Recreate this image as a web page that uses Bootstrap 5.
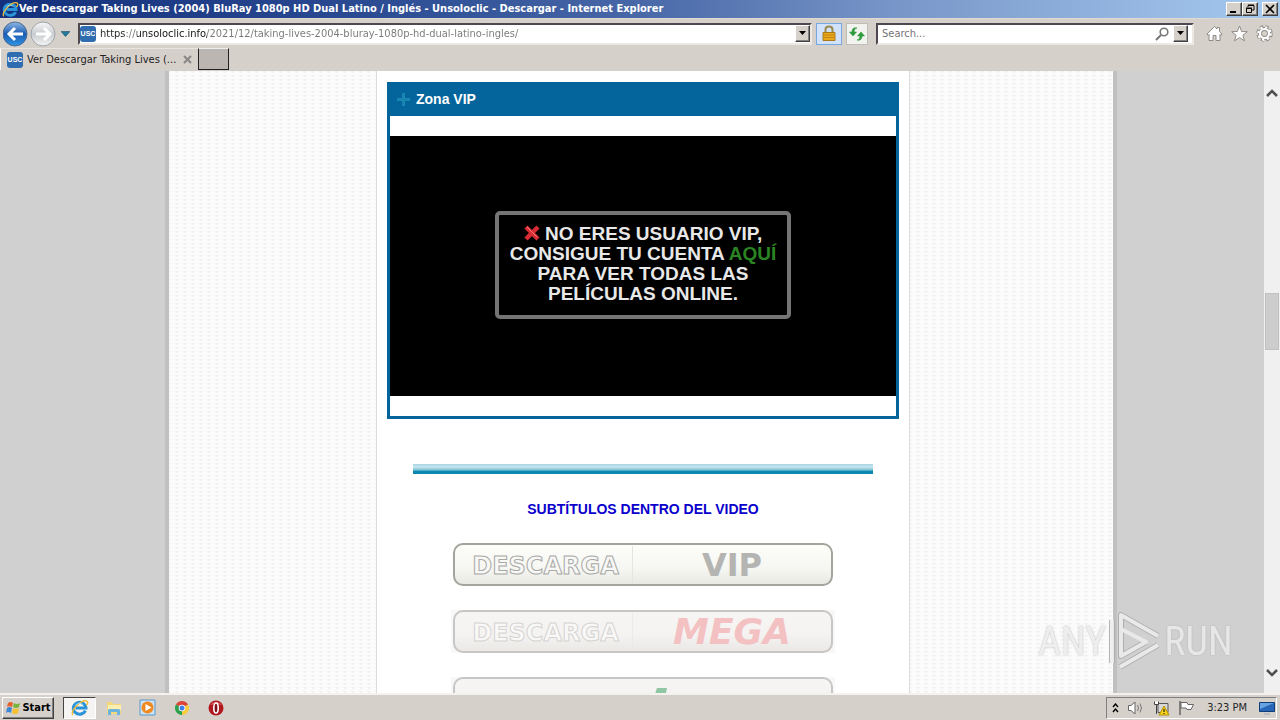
<!DOCTYPE html>
<html lang="es">
<head>
<meta charset="utf-8">
<meta name="viewport" content="width=device-width, initial-scale=1">
<title>Ver Descargar Taking Lives (2004)</title>
<link href="https://cdn.jsdelivr.net/npm/bootstrap@5.3.0/dist/css/bootstrap.min.css" rel="stylesheet">
<style>
:root{--face:#d6d0ca}
body{font-family:"Liberation Sans",Arial,sans-serif;background:#d0d0d0}
svg{display:block;flex:none}
button{padding:0;border:0;background:none}
.ui{font-family:"DejaVu Sans Condensed","DejaVu Sans",sans-serif;font-size:11px;line-height:16px}
.titlebar{height:18px;background:linear-gradient(90deg,#14307c,#2c4c94 30%,#4868a8 50%,#7896c8 70%,#a6caf0);padding:0 2px}
.raised{background:var(--face);border:1px solid;border-color:#fff #404040 #404040 #fff;box-shadow:inset -1px -1px #808080;color:#000;display:flex;align-items:center;justify-content:center}
.winbtn{width:16px;height:14px}
.toolbar-row{height:30px;background:var(--face);padding:4px 7px 4px 3px;border-top:1px solid #dedad0}
.field{height:22px;background:#fff;border:2px solid;border-color:#504850 #eee8e2 #eee8e2 #504850}
.field input{border:0;outline:0;background:transparent;min-width:0;padding:0;color:#777}
.field .url{-webkit-text-fill-color:transparent;background:linear-gradient(90deg,#222 0 26px,#777 0 37px,#111 0 107px,#777 0);-webkit-background-clip:text;background-clip:text}
.searchbox{width:318px;flex:none}
.drop{width:15px;height:17px}
.tool{width:22px;height:22px;display:flex;align-items:center;justify-content:center;border:1px solid #c0bcb8;background:#f2f2ee}
.tool.lock{width:26px;background:#d2e2fa;border-color:#78a8e0}
.usc{width:16px;height:16px;border-radius:3px;background:#2f6cb0;color:#fff;font:bold 7px/16px "Liberation Sans",sans-serif;text-align:center;flex:none}
.tabs-row{height:23px;background:var(--face)}
.tab-on{width:198px;height:22px;border-left:1px solid #fff;border-top:1px solid #e8e4e0;padding:0 6px;color:#222}
.newtab{width:31px;height:22px;border:1px solid;border-color:#eee #222 #222 #222;background:#bcb6b2}
.view{background:#d0d0d0;min-height:0}
.page-wrap{max-width:954px;padding-left:2px}
.page-box{border:solid #c0c0c0;border-width:0 4px;background:#fafafa}
.side-l{flex:207 1 0}
.side-r{flex:203 1 0}
.side-l,.side-r{background:linear-gradient(135deg,#f2f2f2 25%,transparent 0) 0 0/8px 4px,linear-gradient(225deg,#f2f2f2 25%,transparent 0) 0 0/8px 4px,#fbfbfb}
.post{flex:0 1 534px;background:#fff;border:solid #dcdcdc;border-width:0 1px;padding:11px 10px 0}
.zone{border:3px solid #04659c;border-top:0;padding-bottom:20px}
.zone h2{height:34px;margin:0 -3px 20px;background:#04659c;color:#fff;font-size:14px;font-weight:bold;line-height:34px;padding-left:10px;gap:6px}
.player{height:260px;background:#000;padding-bottom:2px}
.notice{width:296px;border:4px solid #747474;border-radius:5px;padding:9px 6px 11px;font-size:19px;line-height:20px;font-weight:bold;color:#e8e8e8}
.notice a{color:#2a8422;text-decoration:none}
.notice svg{display:inline-block;vertical-align:-1px}
.rule-bar{width:460px;height:10px;margin:45px 0 25px 26px;background:linear-gradient(#a8d4e4,#c8e6f0 30%,#78c0d4 60%,#0c88b0 75%)}
.subs{font-size:14px;line-height:20px;font-weight:bold;color:#0a00cc}
.dl{display:flex;align-items:center;width:380px;height:43px;border:2px solid #a4a49c;border-radius:10px;background:linear-gradient(#fdfdfa,#f6f6f2 60%,#e9e9e4);font-family:"DejaVu Sans",sans-serif;font-weight:bold;text-decoration:none;color:#b4b4b2;white-space:nowrap}
.dl .what{width:178px;height:38px;border-right:1px solid #e4e4e0;font-size:24px;line-height:40px;padding-left:4px;color:#f8f8f6;-webkit-text-stroke:1px #a8a8a6;text-align:center}
.dl .host{flex:1;text-align:center;font-size:32px;line-height:40px}
.dl.dim{border-color:#c8c6c4;background:linear-gradient(#f6f5f4,#f4f3f2 60%,#ebe8e5)}
.dl.dim .what{-webkit-text-stroke-color:#d6d3d2;border-color:#ece9e8}
.dl.dim .mega{font-size:36px;line-height:36px;font-style:italic;color:#f3c1c1}
.halo{background:#f8f8f8;padding:0 2px}
.scroller{width:16px;background:#f0f0f0;right:0;top:0;bottom:0;padding:16px 1px 14px}
.thumb{height:57px;margin-top:194px;background:#cdcdcd;border:1px solid #c0c0c0}
.wm{right:48px;bottom:18px;width:194px;height:66px;color:#ececec;font-family:"Liberation Sans Narrow","Roboto Condensed",Roboto,sans-serif;font-size:40px;line-height:66px;text-shadow:0 0 2px #aaa;pointer-events:none;opacity:.85}
.taskbar{height:28px;background:var(--face);border-top:2px solid #f4f2ee;padding:2px 3px 1px 2px;gap:1px}
.start{width:52px;height:22px;font-weight:bold;font-size:11px;gap:1px}
.task{width:33px;height:22px;display:flex;align-items:center;justify-content:center}
.task.on{background:#f6f4f2;border:1px solid;border-color:#444 #fff #fff #444}
.tray{height:22px;width:171px;border:1px solid;border-color:#808080 #fff #fff #808080;padding:0 1px 0 5px}
</style>
</head>
<body class="vh-100 d-flex flex-column overflow-hidden">
<svg width="0" height="0" class="position-absolute" aria-hidden="true">
 <symbol id="ie" viewBox="0 0 20 20"><path d="M16 13a7 6.600 0 1 1 .6-3H5" fill="none" stroke="#2b93d8" stroke-width="3.400"/><path d="M2 18C-1 13 11 1 17 2c3 1 1 4 0 5" fill="none" stroke="#eebb35" stroke-width="1.500"/><path d="M5 7q4-4 8-1" stroke="#9be0fc" fill="none"/></symbol>
 <symbol id="dn" viewBox="0 0 9 5"><path d="M1 0h7L4.500 4z" fill="#000"/></symbol>
</svg>

<header class="ui">
 <div class="titlebar d-flex align-items-center text-white fw-bold">
  <svg width="17" height="17"><use href="#ie"/></svg>
  <span class="flex-grow-1 text-nowrap overflow-hidden">Ver Descargar Taking Lives (2004) BluRay 1080p HD Dual Latino / Inglés - Unsoloclic - Descargar - Internet Explorer</span>
  <button class="raised winbtn" aria-label="Minimizar"><svg width="10" height="10"><path d="M1 8h6" stroke="#000" stroke-width="2"/></svg></button>
  <button class="raised winbtn" aria-label="Restaurar"><svg width="10" height="10"><path d="M3 3V1.500h6V6H7M1.500 4.500h5v4h-5zM3 1h6M1 4h6" fill="none" stroke="#000"/></svg></button>
  <button class="raised winbtn ms-1" aria-label="Cerrar"><svg width="10" height="10"><path d="m1 1 8 8m0-8-8 8" stroke="#000" stroke-width="1.600"/></svg></button>
 </div>
 <div class="toolbar-row d-flex align-items-center">
  <button aria-label="Atrás"><svg width="27" height="26" viewBox="0 0 27 26"><defs><linearGradient id="bk" x2="0" y2="1"><stop stop-color="#90b8e4"/><stop offset=".5" stop-color="#1c5cb4"/><stop offset="1" stop-color="#2f94e4"/></linearGradient><linearGradient id="fw" x2="0" y2="1"><stop stop-color="#f8f8f8"/><stop offset=".5" stop-color="#c8ccd0"/><stop offset="1" stop-color="#f4f4f4"/></linearGradient></defs><circle cx="12" cy="13" r="12" fill="url(#bk)" stroke="#506c90"/><path d="M20 13H6m6-6-6 6 6 6" fill="none" stroke="#fff" stroke-width="3"/></svg></button>
  <button aria-label="Adelante"><svg width="27" height="26" viewBox="0 0 27 26"><circle cx="13" cy="13" r="12" fill="url(#fw)" stroke="#a0a4a8"/><path d="M6 13h14m-6-6 6 6-6 6" fill="none" stroke="#fff" stroke-width="3"/></svg></button>
  <button aria-label="Historial" class="ms-1 me-2"><svg width="9" height="6"><path d="M0 .5h9L4.500 5.500z" fill="#24789c" stroke="#205068" stroke-width=".6"/></svg></button>
  <div class="field d-flex align-items-center flex-grow-1">
   <span class="usc me-1">USC</span>
   <input class="url flex-grow-1" aria-label="Dirección" value="https://unsoloclic.info/2021/12/taking-lives-2004-bluray-1080p-hd-dual-latino-ingles/">
   <button class="raised drop" aria-label="Direcciones"><svg width="9" height="5"><use href="#dn"/></svg></button>
  </div>
  <button class="tool lock ms-1" aria-label="Seguridad"><svg width="14" height="17" viewBox="0 0 14 17"><path d="M3.500 8V4.500q0-3 3.500-3t3.500 3V8" fill="none" stroke="#9a8a50" stroke-width="2"/><path d="M1 7.500h12v8H1z" fill="#eaa91c" stroke="#a87818"/><path d="M2 10h10M2 12.500h10" stroke="#c48410"/></svg></button>
  <button class="tool ms-1" aria-label="Actualizar"><svg width="16" height="14" viewBox="0 0 16 14"><path d="M8 1Q5 1 5 5h2.500L4 9 .5 5H3q0-5 5-4M8 13q3 0 3-4H8.500L12 5l3.500 4H13q0 5-5 4" fill="#2e9a3c" stroke="#2e9a3c" stroke-width=".6"/></svg></button>
  <div class="field d-flex align-items-center ms-2 searchbox">
   <input class="flex-grow-1 ps-1" aria-label="Buscar" placeholder="Search...">
   <svg width="14" height="14" viewBox="0 0 14 14"><circle cx="9" cy="5" r="3.800" fill="none" stroke="#777" stroke-width="1.600"/><path d="M6 8 1 13" stroke="#777" stroke-width="2"/></svg>
   <button class="raised drop ms-1 me-1" aria-label="Buscadores"><svg width="9" height="5"><use href="#dn"/></svg></button>
  </div>
  <div class="d-flex gap-2 ms-2 ps-1">
   <button aria-label="Inicio"><svg width="17" height="19" viewBox="0 0 17 17"><path d="m1 9 7.500-7.500L11 4V2.500h2.500v4L16 9l-1 1.500-1-1V15.500h-4v-5H7v5H3v-6l-1 1z" fill="#fff" stroke="#8e8a86"/></svg></button>
   <button aria-label="Favoritos"><svg width="17" height="19" viewBox="0 0 17 17"><path d="m8.500 1 2.200 5.500 5.600.2-4.400 3.600 1.600 5.500-5-3.200-5 3.200 1.600-5.500L.7 6.700l5.600-.2z" fill="#fff" stroke="#8e8a86"/></svg></button>
   <button aria-label="Herramientas"><svg width="17" height="19" viewBox="0 0 17 17"><circle cx="8.500" cy="8.500" r="6.500" fill="none" stroke="#8e8a86" stroke-width="3.500" stroke-dasharray="3.200 1.900"/><circle cx="8.500" cy="8.500" r="4.500" fill="none" stroke="#8e8a86" stroke-width="4"/><circle cx="8.500" cy="8.500" r="6.300" fill="none" stroke="#fff" stroke-width="2.200" stroke-dasharray="2.200 2.750"/><circle cx="8.500" cy="8.500" r="4.500" fill="none" stroke="#fff" stroke-width="2.200"/></svg></button>
  </div>
 </div>
 <div class="tabs-row d-flex">
  <div class="tab-on d-flex align-items-center gap-1"><span class="usc">USC</span><span class="flex-grow-1 text-truncate">Ver Descargar Taking Lives (...</span><button aria-label="Cerrar pestaña"><svg width="9" height="9"><path d="m1 1 7 7m0-7-7 7" stroke="#888" stroke-width="2"/></svg></button></div>
  <button class="newtab" aria-label="Nueva pestaña"></button>
 </div>
</header>

<div class="view flex-grow-1 position-relative overflow-hidden">
 <div class="page-wrap mx-auto h-100">
  <div class="page-box d-flex h-100">
   <div class="side-l"></div>
   <main class="post">
    <section class="zone">
     <h2 class="d-flex align-items-center"><svg width="13" height="13"><path d="M6.500 0v13M0 6.500h13" stroke="#1886b0" stroke-width="3"/></svg>Zona VIP</h2>
     <div class="player d-flex align-items-center justify-content-center">
      <div class="notice text-center"><svg width="16" height="16" viewBox="0 0 16 16"><path d="m2 2 12 12m0-12L2 14" stroke="#d82c34" stroke-width="4.500"/><path d="m3 2 10 10" stroke="#f08080"/></svg> NO ERES USUARIO VIP, CONSIGUE TU CUENTA <a href="#">AQUÍ</a><br>PARA VER TODAS LAS PELÍCULAS ONLINE.</div>
     </div>
    </section>
    <div class="rule-bar"></div>
    <p class="subs text-center mb-4">SUBTÍTULOS DENTRO DEL VIDEO</p>
    <div class="d-flex flex-column align-items-center">
     <a class="dl mb-4" href="#"><span class="what">DESCARGA</span><span class="host">VIP</span></a>
     <div class="halo mb-4"><a class="dl dim" href="#"><span class="what">DESCARGA</span><span class="host mega">MEGA</span></a></div>
     <div class="halo"><a class="dl dim justify-content-center" href="#" aria-label="Descarga"><svg width="64" height="28" viewBox="0 0 64 28"><path d="M46 3h10l-5 24H38z" fill="#8fc7a4"/></svg></a></div>
    </div>
   </main>
   <div class="side-r"></div>
  </div>
 </div>
 <div class="scroller position-absolute d-flex flex-column">
  <svg width="14" height="12" viewBox="0 0 14 12"><path d="m2 9 5-5 5 5" fill="none" stroke="#505050" stroke-width="2.500"/></svg>
  <div class="thumb flex-shrink-0"></div>
  <svg class="mt-auto" width="14" height="12" viewBox="0 0 14 12"><path d="m2 3 5 5 5-5" fill="none" stroke="#505050" stroke-width="2.500"/></svg>
 </div>
 <div class="wm position-absolute d-flex justify-content-between align-items-center"><span>ANY</span><svg width="58" height="62" viewBox="0 0 58 62"><g fill="none" stroke="#aaa" stroke-width="6" stroke-linejoin="round"><path d="M52 25 15 4v41l25-14M52 34 14 56M6 9v43"/></g><g fill="none" stroke="#eee" stroke-width="4" stroke-linejoin="round"><path d="M52 25 15 4v41l25-14L15 18M52 34 14 56M6 9v43"/></g></svg><span>RUN</span></div>
</div>

<footer class="taskbar ui d-flex align-items-center">
 <button class="raised start"><svg width="16" height="16" viewBox="0 0 16 16"><path d="M3 3q3-2 5 0L7 7Q4 5.500 2 7z" fill="#e8602c"/><path d="M9 3q3 2 6 0l-1 4q-3 2-6 0z" fill="#78b43c"/><path d="M2 8q3-2 5 0l-1 5q-3-2-5 0z" fill="#3c88d8"/><path d="M8 8q3 2 6 0l-1 5q-3 2-6 0z" fill="#f4c030"/></svg>Start</button>
 <button class="task on ms-2" aria-label="Internet Explorer"><svg width="18" height="18"><use href="#ie"/></svg></button>
 <button class="task" aria-label="Explorador"><svg width="18" height="18" viewBox="0 0 18 18"><path d="M2 3h5l1 2h8v10H2z" fill="#f2d878"/><path d="M3 6h13v5H3z" fill="#fbeeb0"/><path d="M3 16v-5q0-1 2-1h8q2 0 2 1v5h-3v-3H6v3z" fill="#6cb4dc"/></svg></button>
 <button class="task" aria-label="Reproductor"><svg width="17" height="17" viewBox="0 0 17 17"><path d="M1 1h15v15H1z" fill="#cbe2f4" stroke="#5898cc"/><circle cx="8.500" cy="8.500" r="6" fill="#f08a20"/><path d="M6.500 5v7l6-3.500z" fill="#fff"/></svg></button>
 <button class="task" aria-label="Chrome"><svg width="16" height="16" viewBox="0 0 16 16"><path d="M8 8 1.900 4.500a7 7 0 0 1 12.200 0z" fill="#dc4437"/><path d="M8 8V15A7 7 0 0 1 1.900 4.500z" fill="#2fa04e"/><path d="m8 8 6.100-3.500A7 7 0 0 1 8 15z" fill="#f8cc40"/><circle cx="8" cy="8" r="3.300" fill="#fff"/><circle cx="8" cy="8" r="2.500" fill="#4080e8"/></svg></button>
 <button class="task" aria-label="Opera"><svg width="16" height="16" viewBox="0 0 16 16"><circle cx="8" cy="8" r="7.500" fill="#b01820"/><path d="M2 5q6-6 12 0-6-2-12 0" fill="#e07070"/><ellipse cx="8" cy="8" rx="2.200" ry="5" fill="#801018" stroke="#fff" stroke-width="1.600"/></svg></button>
 <div class="tray d-flex align-items-center ms-auto">
  <svg width="7" height="10"><path d="m1 4 2.500-3L6 4M1 9l2.500-3L6 9" fill="none" stroke="#000" stroke-width="1.400"/></svg>
  <svg class="ms-2" width="18" height="16" viewBox="0 0 18 16"><path d="M1.500 5.500H4L8 2v12L4 10.500H1.500z" fill="#fff" stroke="#666"/><path d="M10.500 5q2 3 0 6M13 3.500q3 4.500 0 9" fill="none" stroke="#777"/></svg>
  <svg class="ms-2" width="17" height="16" viewBox="0 0 17 16"><path d="M5 3.500h10v9H5z" fill="#d8d8d8" stroke="#555"/><path d="M1.500 1.500v3h4v-3M3.500 5v9" fill="#fff" stroke="#444"/><path d="m11 6 5 9H6z" fill="#f8d420" stroke="#b89000"/><path d="M11 9v3m0 1v1" stroke="#000"/></svg>
  <svg class="ms-2" width="17" height="16" viewBox="0 0 17 16"><path d="M2 1v14" stroke="#666" stroke-width="1.500"/><path d="M3 2.500h6l1 2h5.500l-2.500 5H9l-1-1.500H3z" fill="#fff" stroke="#666"/></svg>
  <span class="ms-auto me-2 pe-1">3:23 PM</span>
  <svg width="16" height="14" viewBox="0 0 16 14"><path d="M.5 1.500h15v9H.5z" fill="#2866b8" stroke="#103c78"/><path d="M1 2h14L1 8z" fill="#68a4e4"/><path d="M5 13h6" stroke="#9ab"/></svg>
 </div>
</footer>
<script src="https://cdn.jsdelivr.net/npm/bootstrap@5.3.0/dist/js/bootstrap.bundle.min.js"></script>
</body>
</html>
